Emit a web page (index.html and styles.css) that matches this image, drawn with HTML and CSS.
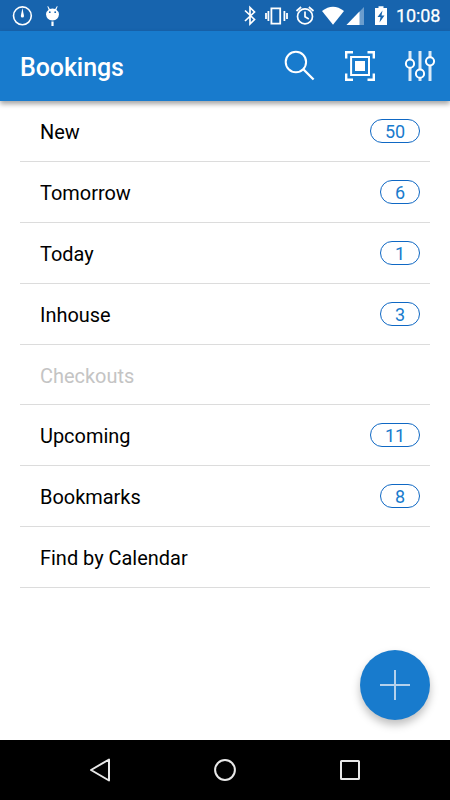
FILE: index.html
```html
<!DOCTYPE html>
<html lang="en">
<head>
<meta charset="utf-8">
<title>Bookings</title>
<link rel="stylesheet" href="styles.css">
</head>
<body>
<div class="screen">
  <div class="status">
    <svg width="80" height="31" viewBox="0 0 80 31">
      <circle cx="22.4" cy="15.800" r="8.9" fill="none" stroke="#fff" stroke-width="1.6"/>
      <path d="M22.4 8l1.600 8a1.600 1.600 0 1 1-3.200 0z" fill="#fff"/>
      <path d="M48 6l1.8 3q2.7-1 5.4 0L57 6l.6.5-1.2 3.2q2.6 1.8 2.6 4.6-.5 6-6.5 6.2-6-.2-6.5-6.2 0-2.800 2.600-4.600L47.400 6.500z" fill="#fff"/>
      <path d="M51.400 21.500h2.200V26h-2.200z" fill="#fff"/>
      <circle cx="49.800" cy="12.200" r=".9" fill="#1764ae"/><circle cx="55.200" cy="12.200" r=".9" fill="#1764ae"/>
    </svg>
    <div class="status-right">
      <svg width="18" height="31" viewBox="242 0 18 31"><path d="M245 10.500l9.500 9-4.500 4.500V7.500l4.500 4.500-9.500 9" fill="none" stroke="#fff" stroke-width="1.700"/></svg>
      <svg width="32" height="31" viewBox="260 0 32 31"><path d="M271.400 8.300h8.800v15.400h-8.800zM268.400 11v10M284.400 11v10M266 13v6M287 13v6" fill="none" stroke="#fff" stroke-width="1.800"/></svg>
      <svg width="26" height="31" viewBox="292 0 26 31"><g fill="none" stroke="#fff" stroke-width="1.700"><circle cx="305" cy="16.400" r="7.500"/><path d="M305 11.500v5.200l3.800 2.300M296.500 11l4.600-4M313.500 11l-4.600-4"/></g></svg>
      <svg width="27" height="31" viewBox="318 0 27 31"><path d="M322 11q11-8.500 22 0l-11 13.700z" fill="#fff"/></svg>
      <svg width="23" height="31" viewBox="345 0 23 31"><path d="M364 7v18h-17.500z" fill="#6b9dcd"/><path d="M359.500 11.600V25h-13z" fill="#fff"/></svg>
      <svg width="28" height="31" viewBox="368 0 28 31"><path d="M375 8h3.500V6.300h5V8h3.500v17h-12z" fill="#fff"/><path d="M382.500 10.500l-5 6.500h3l-1 5.500 5-7h-3z" fill="#1764ae"/></svg>
      <span class="clock">10:08</span>
    </div>
  </div>
  <header class="bar">
    <h1>Bookings</h1>
    <div class="actions">
      <svg width="32" height="32" viewBox="284 50 32 32" fill="none" stroke="#fff"><circle cx="295.900" cy="62" r="10.200" stroke-width="2"/><path d="M303.300 69.300l10.300 10.200" stroke-width="2.300"/></svg>
      <svg width="32" height="32" viewBox="344 50 32 32"><path d="M346.200 58.500v-6.300h6.800M367.500 52.200h6.300v6.300M373.800 73.500v6.300h-6.300M353 79.800h-6.800v-6.300" fill="none" stroke="#fff" stroke-width="2.400"/><path d="M351.100 57h17.900v18h-17.900z" fill="none" stroke="#fff" stroke-width="2"/><path d="M355 61h10v10h-10z" fill="#fff"/></svg>
      <svg width="32" height="32" viewBox="404 50 32 32" fill="none" stroke="#fff"><path d="M410 51v8.500M410 68v13M420 51v18.500M420 78v3M430 51v6M430 65.500V81" stroke="#dcebf8" stroke-width="3"/><g stroke-width="2"><circle cx="410" cy="63.700" r="4.100"/><circle cx="420" cy="73.700" r="4.100"/><circle cx="430" cy="61.300" r="4.100"/></g></svg>
    </div>
  </header>
  <main class="content">
    <ul class="list">
      <li>New<span class="badge wide">50</span></li>
      <li>Tomorrow<span class="badge">6</span></li>
      <li>Today<span class="badge">1</span></li>
      <li>Inhouse<span class="badge">3</span></li>
      <li class="disabled">Checkouts</li>
      <li>Upcoming<span class="badge wide">11</span></li>
      <li>Bookmarks<span class="badge">8</span></li>
      <li>Find by Calendar</li>
    </ul>
    <button class="fab" aria-label="Add"><svg width="30" height="30" viewBox="0 0 30 30"><path d="M15 0v30M0 15h30" stroke="#b4d1ec" stroke-width="2"/></svg></button>
  </main>
  <nav class="nav">
    <svg width="24" height="26" viewBox="88 757 24 26"><path d="M109 759.500v21L91 770z" fill="none" stroke="#e8e8e8" stroke-width="2" stroke-linejoin="round"/></svg>
    <svg width="24" height="26" viewBox="213 757 24 26"><circle cx="225" cy="770" r="9.900" fill="none" stroke="#e8e8e8" stroke-width="2"/></svg>
    <svg width="24" height="26" viewBox="338 757 24 26"><rect x="341" y="761" width="18" height="18" rx=".5" fill="none" stroke="#e8e8e8" stroke-width="2"/></svg>
  </nav>
</div>
</body>
</html>
```

FILE: styles.css
```css
* { box-sizing: border-box; }
body { margin: 0; font-family: Roboto, sans-serif; }
svg { display: block; flex: none; }
.screen { width: 450px; height: 800px; display: flex; flex-direction: column; background: #fff; overflow: hidden; }
.status { height: 31px; flex: none; display: flex; justify-content: space-between; background: #1764ae; color: #fff; }
.status-right { display: flex; width: 208px; }
.clock { font-size: 18px; font-weight: 400; line-height: 32px; letter-spacing: -.1px; white-space: nowrap; -webkit-text-stroke: .25px #fff; }
.bar { height: 70px; flex: none; display: flex; align-items: center; justify-content: space-between; padding: 0 14px 0 20px; background: #187bcd; color: #fff; box-shadow: 0 3px 5px rgba(0, 0, 0, .36); z-index: 1; }
.bar h1 { margin: 3px 0 0; font-size: 25px; letter-spacing: -.08px; font-weight: 500; line-height: 30px; }
.actions { display: flex; gap: 28px; }
.content { flex: 1; position: relative; min-height: 0; }
.list { margin: 0; padding: .3px 20px 0; list-style: none; }
.list li { height: 60.83px; display: flex; align-items: center; justify-content: space-between; padding: 2px 10px 0 20px; border-bottom: 1px solid #dcdcdc; font-size: 19.95px; color: #000; }
.list li.disabled { color: #c4c4c4; }
.badge { width: 40px; height: 24px; margin-top: -2.4px; border: 1px solid #0f68c4; border-radius: 12px; color: #187bcd; font-size: 18px; line-height: 24px; text-align: center; }
.badge.wide { width: 50px; }
.fab { position: absolute; right: 20px; bottom: 20px; width: 70px; height: 70px; padding: 0; border: 0; border-radius: 50%; display: flex; align-items: center; justify-content: center; background: #187bcd; box-shadow: 0 5px 8px rgba(0, 0, 0, .25); }
.nav { height: 60px; flex: none; display: flex; justify-content: center; align-items: center; gap: 101px; background: #000; }
```
